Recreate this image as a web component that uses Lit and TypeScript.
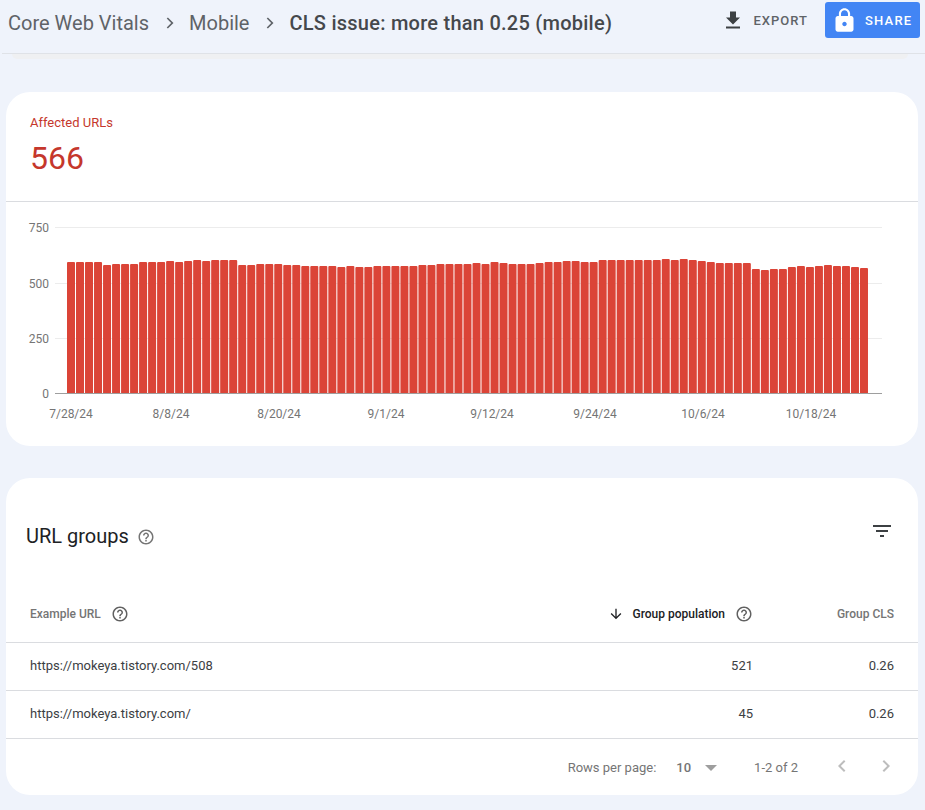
import { LitElement, html, css, svg } from "lit";
import { customElement } from "lit/decorators.js";

const TOPS = [
  262,262,262,262,265,264,264,264,262,262,262,261,262,261,260,261,260,260,260,265,265,264,264,264,265,265,
  266,266,266,266,267,266,267,267,266,266,266,266,266,265,265,264,
  264,264,264,263,264,262,263,264,264,264,263,262,262,261,261,262,262,260,260,260,
  260,260,260,260,259,260,259,260,261,262,263,263,263,263,269,270,269,269,267,266,267,266,265,266,266,267,268,
];

const HELP = html`<svg class="help" viewBox="0 0 24 24" aria-hidden="true"><path fill="currentColor" d="M11 18h2v-2h-2v2zm1-16C6.48 2 2 6.48 2 12s4.480 10 10 10 10-4.480 10-10S17.520 2 12 2zm0 18c-4.410 0-8-3.590-8-8s3.590-8 8-8 8 3.590 8 8-3.590 8-8 8zm0-14c-2.210 0-4 1.790-4 4h2c0-1.100.9-2 2-2s2 .9 2 2c0 2-3 1.750-3 5h2c0-2.250 3-2.500 3-5 0-2.210-1.790-4-4-4z"/></svg>`;

const CHEVRON = html`<svg class="chev" viewBox="0 0 24 24" aria-hidden="true"><path fill="currentColor" d="M9.290 6.710 10.700 5.300l6.700 6.700-6.700 6.700-1.410-1.410L14.580 12z"/></svg>`;

@customElement("app-root")
export class AppRoot extends LitElement {
  static styles = css`
    :host {
      display: block;
      width: 925px;
      height: 810px;
      overflow: hidden;
      background: #eff3fb;
      font-family: Roboto, "Liberation Sans", sans-serif;
      color: #202124;
    }
    .header {
      height: 53px;
      margin-left: 2px;
      border-bottom: 1px solid #dfe2e7;
      display: flex;
      align-items: center;
      justify-content: space-between;
    }
    .crumbs {
      display: flex;
      align-items: center;
      padding-left: 6px;
      margin-top: -8px;
      font-size: 20px;
      color: #5f6368;
      white-space: nowrap;
    }
    .crumbs .last { color: #45484c; font-weight: 500; letter-spacing: 0.25px; }
    .chev { width: 20px; height: 20px; color: #5f6368; margin: 0 10px; }
    .actions { display: flex; align-items: center; margin-top: -13px; }
    .export {
      display: flex;
      align-items: center;
      font-size: 13px;
      font-weight: 500;
      letter-spacing: 1px;
      color: #5f6368;
      margin-right: 17px;
    }
    .export svg { width: 24px; height: 24px; color: #3c4043; margin-right: 9px; }
    .share {
      width: 95px;
      height: 36px;
      margin-right: 5px;
      border-radius: 3px;
      background: #4285f4;
      color: #fff;
      font-size: 13px;
      font-weight: 500;
      letter-spacing: 1.2px;
      display: flex;
      align-items: center;
      padding-left: 6px;
      box-sizing: border-box;
    }
    .share svg { width: 27px; height: 27px; margin-right: 7px; }
    .peek {
      height: 5px;
      margin: 0 17px 0 12px;
      background: #eff0f2;
      border-radius: 0 0 12px 12px;
    }
    .card {
      margin: 0 7px 0 6px;
      background: #fff;
      border-radius: 24px;
    }
    .c1 { margin-top: 33px; height: 354px; }
    .c2 { margin-top: 32px; height: 317px; }
    .summary {
      height: 110px;
      box-sizing: border-box;
      padding: 24px 24px 0;
      border-bottom: 1px solid #dadce0;
      color: #c5372c;
    }
    .summary .lab { font-size: 13px; line-height: 14px; }
    .summary .num { font-size: 32px; line-height: 40px; margin-top: 8px; }
    .chart { display: block; }
    .chart text { font-family: Roboto, sans-serif; font-size: 12px; fill: #757575; }
    .titlebar {
      display: flex;
      align-items: center;
      justify-content: space-between;
      height: 111px;
      padding: 5px 26px 0 20px;
      box-sizing: border-box;
    }
    .title { display: flex; align-items: center; font-size: 20px; color: #202124; }
    .title .help { width: 18px; height: 18px; margin-left: 8px; color: #757575; margin-top: 1px; }
    .filter { width: 24px; height: 24px; color: #3c4043; margin-top: -10px; margin-right: -2px; }
    .row {
      display: grid;
      grid-template-columns: 1fr 200px 141px;
      align-items: center;
      padding: 0 24px 2px;
      font-size: 13px;
      border-bottom: 1px solid #dadce0;
      height: 48px;
      box-sizing: border-box;
      color: #3c4043;
      white-space: nowrap;
    }
    .row.head { height: 54px; font-weight: 500; color: #757575; font-size: 12px; padding-bottom: 4px; }
    .cell { display: flex; align-items: center; }
    .right { justify-content: flex-end; }
    .head .help { width: 18px; height: 18px; margin-left: 10px; color: #616161; }
    .sorted { color: #202124; }
    .sorted .arrow { width: 16px; height: 16px; margin-right: 8px; color: #202124; }
    .pager {
      display: flex;
      align-items: center;
      height: 57px;
      font-size: 13px;
      color: #757575;
    }
    .pager .spacer { flex: 1; }
    .pager .count { font-weight: 500; margin-left: 20px; }
    .caret { width: 0; height: 0; border: 6.500px solid transparent; border-top: 6px solid #9e9e9e; border-bottom: 0; margin-left: 14px; }
    .pager .range { margin-left: 37px; margin-right: 32px; }
    .pager svg { width: 24px; height: 24px; color: #bdbdbd; margin-right: 20px; margin-top: -3px; }
  `;

  render() {
    const base = 191.5;
    const bars = TOPS.map((top, i) => {
      const x = 61 + i * (802 / 89);
      const h = 393.5 - top;
      return svg`<path d="M${x.toFixed(2)} ${base}v${-(h - 1)}q0-1 1-1h6q1 0 1 1v${h - 1}z" fill="#db4437"/>`;
    });
    const grid = [25, 81, 136].map((y) => svg`<line x1="49" x2="876" y1=${y + 0.5} y2=${y + 0.5} stroke="#ececec"/>`);
    const ys = [["750", 30], ["500", 86], ["250", 141], ["0", 196]] as const;
    const xs = [["7/28/24", 65], ["8/8/24", 165], ["8/20/24", 273], ["9/1/24", 380], ["9/12/24", 486], ["9/24/24", 589], ["10/6/24", 697], ["10/18/24", 805]] as const;
    return html`
      <div class="header">
        <div class="crumbs">
          <span>Core Web Vitals</span>${CHEVRON}<span>Mobile</span>${CHEVRON}<span class="last">CLS issue: more than 0.25 (mobile)</span>
        </div>
        <div class="actions">
          <div class="export">
            <svg viewBox="0 0 24 24"><path fill="currentColor" d="M19 9.500h-4v-6H9v6H5l7 7 7-7zM5 18.500v2h14v-2H5z"/></svg>
            EXPORT
          </div>
          <div class="share">
            <svg viewBox="0 0 24 24"><path fill="currentColor" d="M18 8h-1V6c0-2.760-2.240-5-5-5S7 3.240 7 6v2H6c-1.100 0-2 .9-2 2v10c0 1.100.9 2 2 2h12c1.100 0 2-.9 2-2V10c0-1.100-.9-2-2-2zm-6 9c-1.100 0-2-.9-2-2s.9-2 2-2 2 .9 2 2-.9 2-2 2zm3.100-9H8.900V6c0-1.710 1.390-3.100 3.100-3.100 1.710 0 3.100 1.390 3.100 3.100v2z"/></svg>
            SHARE
          </div>
        </div>
      </div>
      <div class="peek"></div>

      <section class="card c1">
        <div class="summary">
          <div class="lab">Affected URLs</div>
          <div class="num">566</div>
        </div>
        <svg class="chart" width="912" height="243" viewBox="0 0 912 243">
          ${grid}
          ${bars}
          <line x1="49" x2="876" y1="191.500" y2="191.500" stroke="#9e9e9e"/>
          ${ys.map(([t, y]) => svg`<text x="43" y=${y} text-anchor="end">${t}</text>`)}
          ${xs.map(([t, x]) => svg`<text x=${x} y="216" text-anchor="middle">${t}</text>`)}
        </svg>
      </section>

      <section class="card c2">
        <div class="titlebar">
          <div class="title">URL groups ${HELP}</div>
          <svg class="filter" viewBox="0 0 24 24"><path fill="currentColor" d="M10 18h4v-2h-4v2zM3 6v2h18V6H3zm3 7h12v-2H6v2z"/></svg>
        </div>
        <div class="row head">
          <div class="cell">Example URL ${HELP}</div>
          <div class="cell right sorted">
            <svg class="arrow" viewBox="0 0 24 24"><path fill="currentColor" d="m20 12-1.410-1.410L13 16.170V4h-2v12.170l-5.580-5.590L4 12l8 8 8-8z"/></svg>
            Group population ${HELP}
          </div>
          <div class="cell right">Group CLS</div>
        </div>
        <div class="row"><div class="cell">https://mokeya.tistory.com/508</div><div class="cell right">521</div><div class="cell right">0.26</div></div>
        <div class="row"><div class="cell">https://mokeya.tistory.com/</div><div class="cell right">45</div><div class="cell right">0.26</div></div>
        <div class="pager">
          <div class="spacer"></div>
          <span>Rows per page:</span>
          <span class="count">10</span>
          <span class="caret"></span>
          <span class="range">1-2 of 2</span>
          <svg viewBox="0 0 24 24"><path fill="currentColor" d="M15.410 7.410 14 6l-6 6 6 6 1.410-1.410L10.830 12z"/></svg>
          <svg viewBox="0 0 24 24"><path fill="currentColor" d="M10 6 8.590 7.410 13.170 12l-4.580 4.590L10 18l6-6z"/></svg>
        </div>
      </section>
    `;
  }
}
